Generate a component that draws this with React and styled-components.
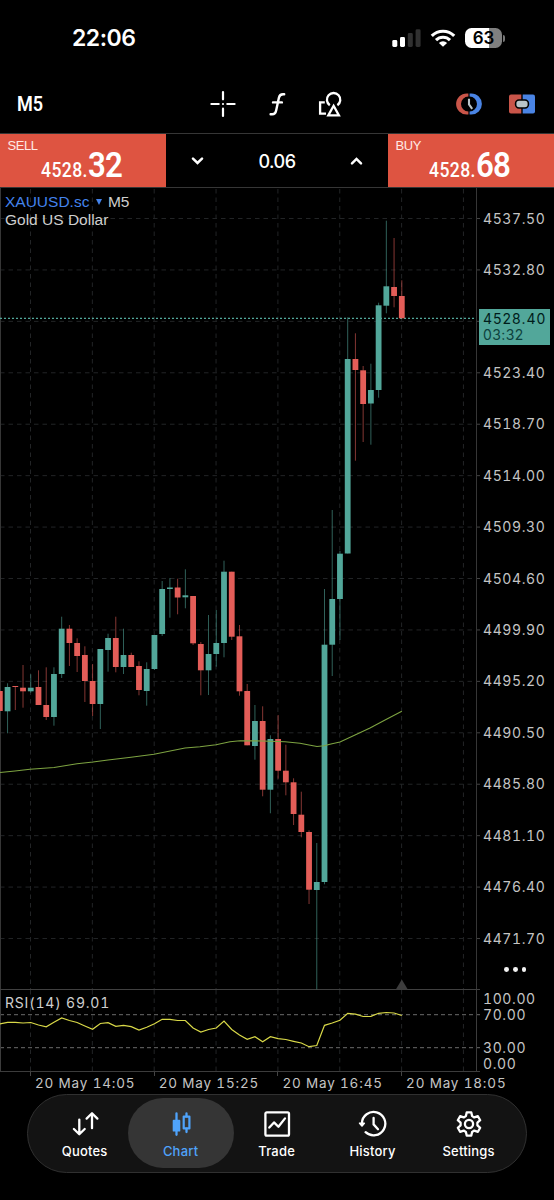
import React from 'react';
import styled, { createGlobalStyle } from 'styled-components';

const GlobalStyle = createGlobalStyle`
  * {
    box-sizing: border-box;
  }
  body {
    margin: 0;
    background: #000;
    font-family: Inter, 'Liberation Sans', sans-serif;
  }
`;

const UP = '#52a79a';
const DOWN = '#e35d58';

const Screen = styled.div`
  width: 554px;
  height: 1200px;
  background: #000;
  color: #fff;
  display: flex;
  flex-direction: column;
  overflow: hidden;
  svg {
    display: block;
    flex: none;
  }
`;

const StatusBar = styled.header`
  height: 76px;
  display: flex;
  align-items: center;
  justify-content: space-between;
  padding: 0 49px 0 72px;
`;

const Clock = styled.span`
  font-size: 23px;
  font-weight: 600;
  letter-spacing: -0.5px;
`;

const StatusIcons = styled.div`
  display: flex;
  align-items: center;
  gap: 9px;
`;

// Battery pill, filled from the left by level
const Battery = styled.div`
  display: flex;
  align-items: center;
  gap: 1px;
`;

const BatteryBody = styled.div`
  width: 37px;
  height: 20px;
  border-radius: 6.5px;
  background: linear-gradient(to right, #fff 0 64%, #808080 64%);
  color: #000;
  font-size: 17px;
  font-weight: 600;
  line-height: 20px;
  text-align: center;
`;

const BatteryTip = styled.div`
  width: 2px;
  height: 7px;
  border-radius: 0 2px 2px 0;
  background: #777;
`;

const Toolbar = styled.nav`
  height: 57px;
  display: grid;
  grid-template-columns: 1fr auto 1fr;
  align-items: center;
  padding: 0 18px 1px 17px;
`;

const Timeframe = styled.span`
  font-family: Roboto, sans-serif;
  font-size: 21px;
  font-weight: 600;
  transform: scaleX(0.86);
  transform-origin: left;
`;

const Tools = styled.div`
  display: flex;
  align-items: center;
  justify-content: ${(props) => props.$align || 'center'};
  gap: ${(props) => props.$gap}px;
`;

const TradePanel = styled.section`
  height: 55px;
  display: flex;
  border-top: 1px solid #363636;
  border-bottom: 1px solid #363636;
`;

const QuoteButton = styled.div`
  width: 166px;
  background: #de5441;
  padding-top: 3px;
  padding-left: 7.5px;
`;

const QuoteLabel = styled.div`
  font-family: 'Liberation Sans', sans-serif;
  font-size: 13px;
  line-height: 18px;
  color: #ffe9e4;
  letter-spacing: -0.4px;
`;

const QuotePrice = styled.div`
  display: flex;
  align-items: baseline;
  margin-left: 33.5px;
  margin-top: -9px;
  font-family: Roboto, sans-serif;
  font-size: 20px;
  font-weight: 500;
  line-height: 38px;
  letter-spacing: 0.45px;
  transform: scaleX(0.88);
  transform-origin: left;
  b {
    font-size: 35.5px;
    font-weight: 600;
    letter-spacing: -0.7px;
  }
`;

const Volume = styled.div`
  flex: 1;
  display: flex;
  align-items: center;
  justify-content: space-between;
  padding: 1px 25px 0 25px;
  font-size: 18px;
  font-weight: 500;
  letter-spacing: -0.5px;
`;

const ChartRow = styled.section`
  display: flex;
  height: ${(props) => props.$height}px;
  position: relative;
`;

// Text drawn over the top left corner of a pane
const PaneTitle = styled.div`
  position: absolute;
  top: ${(props) => props.$top}px;
  left: 5px;
  font-family: 'Liberation Sans', sans-serif;
  font-size: 15.5px;
  line-height: 18px;
  color: #cfcfcf;
`;

const SymbolLine = styled.div`
  display: flex;
  align-items: center;
`;

const SymbolName = styled.span`
  color: #4383ec;
`;

const Arrow = styled.i`
  border: 3px solid transparent;
  border-top: 6px solid #4383ec;
  border-bottom: 0;
  margin: 1px 6px 0 6.5px;
`;

const RsiTitle = styled(PaneTitle)`
  font-family: Inter, sans-serif;
  font-size: 14px;
  letter-spacing: 0.8px;
  font-variant-numeric: tabular-nums;
`;

const Axis = styled.div`
  flex: 1;
  display: flex;
  flex-direction: column;
  padding: ${(props) => props.$top}px 0 0 3px;
  font-size: 14px;
  letter-spacing: 0.6px;
  font-variant-numeric: tabular-nums;
  color: #c4c4c4;
`;

const Tick = styled.div`
  height: ${(props) => props.$height}px;
  line-height: ${(props) => props.$height}px;
  margin-bottom: ${(props) => props.$after || 0}px;
  flex: none;
`;

const LastPrice = styled.div`
  position: absolute;
  left: 479px;
  top: 121px;
  width: 71px;
  height: 36px;
  padding: 1px 0 0 4px;
  background: #52a79a;
  color: #001d1b;
  font-size: 14px;
  line-height: 17px;
  letter-spacing: 1px;
  div + div {
    color: #0d423d;
    letter-spacing: 0.4px;
    line-height: 16px;
  }
`;

const More = styled.div`
  display: flex;
  gap: 4px;
  margin: 3px 0 0 21px;
  i {
    width: 4.8px;
    height: 4.8px;
    border-radius: 50%;
    background: #f2f2f2;
  }
`;

const TimeAxis = styled.div`
  height: 22px;
  display: grid;
  grid-template-columns: repeat(4, 123.7px);
  padding-left: 30px;
  font-size: 13.5px;
  line-height: 23px;
  letter-spacing: 0.82px;
  font-variant-numeric: tabular-nums;
  color: #c4c4c4;
`;

const TimeLabel = styled.span`
  padding-left: 5px;
  white-space: nowrap;
  background: linear-gradient(#444, #444) no-repeat 0 0 / 1px 4px;
`;

const TabBar = styled.nav`
  width: 500px;
  height: 79px;
  margin: 0 0 0 27px;
  padding: 3px 0 0 8.6px;
  display: flex;
  align-items: flex-start;
  border: 1px solid #303030;
  border-radius: 40px;
  background: #131313;
`;

const Tab = styled.div`
  width: ${(props) => (props.$active ? 106 : 96)}px;
  margin: 0 ${(props) => (props.$active ? -5 : 0)}px;
  height: 70px;
  flex: none;
  border-radius: 35px;
  background: ${(props) => (props.$active ? '#353535' : 'transparent')};
  color: ${(props) => (props.$active ? '#4fa3fb' : '#fff')};
  display: flex;
  flex-direction: column;
  align-items: center;
  padding-top: 12px;
  font-size: 13px;
  font-weight: 500;
  line-height: 18px;
  letter-spacing: 0.2px;
  gap: 4px;
`;

// x centre of a bar, counted back from the newest one
const barX = (k) => 401.8 - k * 7.73;

// [top of body, bottom of body, high, low, direction], oldest first
const candles = [
  [691, 711, 691, 711, 0], [687, 711.3, 683.3, 733.3, 1], [686, 687, 686, 710, 0],
  [687.7, 691.3, 665, 707.7, 0], [687.7, 691.3, 674.3, 692.7, 1], [687, 705, 670.3, 705, 0],
  [705, 717, 667.3, 720, 0], [674, 717, 667.3, 725.7, 1], [628.7, 674, 616.7, 678, 1],
  [628.7, 643, 625, 666, 0], [643, 656, 638.3, 672, 0], [655, 681, 646.3, 702, 0],
  [681, 704, 664, 716, 0], [649, 704, 649, 729, 1], [638, 650, 633.7, 671.7, 1],
  [638, 667, 616.7, 672.3, 0], [655, 667, 628.7, 674, 1], [655, 667, 652.7, 667, 0],
  [666, 690, 661.3, 695.3, 0], [669, 691, 662.3, 705.7, 1], [635, 669, 635, 670, 1],
  [589, 634, 581, 636, 1], [587.5, 589, 578, 617.7, 1], [587.5, 597.5, 578.7, 614.3, 0],
  [595.3, 597.3, 569.3, 608.3, 1], [596, 643.3, 596, 645, 0], [644, 670.3, 642, 695.3, 0],
  [654, 670.3, 615, 695, 1], [643, 654, 610, 666.7, 1], [571.7, 643, 560.7, 657.3, 1],
  [571.7, 636.7, 571.7, 640, 0], [636.3, 691.3, 625, 695.7, 0], [691, 745.3, 684, 745.3, 0],
  [721, 746, 705, 759.7, 1], [721, 789.7, 706.3, 796.3, 0], [739, 789.7, 735.3, 813.3, 1],
  [739, 770.7, 715, 778.7, 0], [770.7, 782.3, 744.7, 795.3, 0], [782.3, 814, 778.3, 825, 0],
  [814.7, 832, 791.7, 837.3, 0], [832, 889.7, 830.3, 904, 0], [882, 890, 843, 989.3, 1],
  [644.7, 882, 589, 884.3, 1], [599, 644.7, 510, 676, 1], [553.7, 599, 551, 640, 1],
  [359, 553.5, 317.3, 553.5, 1], [359, 370, 333.3, 460.7, 0], [370.3, 404, 366, 442, 0],
  [390, 403.5, 363.7, 444.7, 1], [305.3, 390, 302.7, 397.7, 1], [286.3, 305.7, 220.7, 313.3, 1],
  [287, 296, 238, 307.3, 0], [296, 318.3, 280.3, 318.3, 0],
];

const average =
  '0,772.5 15,771 30,769.3 54,767.5 77,763.7 93,762 108,760 131,757.3 154,754.3 185,748 200,746.7 216,744.7 230,741.8 240,740.7 262,741 285,741.8 300,743.3 309,745 317,746.5 324,745.7 332,743.7 340,742 355,735 370,728 386,719.5 401.8,711.3';

const rsi = [
  1024, 1022.3, 1022.3, 1023, 1022.5, 1025, 1026.8, 1022.3, 1018, 1020.5, 1022.5, 1026, 1029.3,
  1023.5, 1022.7, 1026.3, 1025.3, 1026.7, 1030, 1027.3, 1023.7, 1019.3, 1019.3, 1020.5, 1020.5,
  1028, 1032, 1029.5, 1028, 1021, 1029.5, 1035, 1039.3, 1036.7, 1041.7, 1036.7, 1038.7, 1039.5,
  1041.3, 1043, 1046.7, 1045.5, 1025.3, 1023, 1020.3, 1013.3, 1014.2, 1016.5, 1016.3, 1013.3,
  1012.5, 1013, 1015.5,
];

const columns = [0, 1, 2, 3, 4, 5, 6, 7].map((i) => 30.5 + i * 61.85);
const rows = Array.from({ length: 15 }, (_, i) => 218.5 + i * 51.43);
const prices = rows.map((_, i) => (4537.5 - i * 4.7).toFixed(2));

const GridColumns = ({ from, to }) =>
  columns.map((x) => (
    <line key={x} x1={x} x2={x} y1={from} y2={to} stroke="#222426" strokeDasharray="4.5 4" />
  ));

const PriceChart = () => (
  <svg width="480" height="802" viewBox="0 188 480 802">
    <GridColumns from={189} to={990} />
    {rows.map((y) => (
      <g key={y}>
        <line x1="0" x2="476" y1={y} y2={y} stroke="#222426" strokeDasharray="4.5 4" />
        <line x1="476" x2="480" y1={y} y2={y} stroke="#444" />
      </g>
    ))}
    <path d="M0.5 188V990M476.5 188V990" stroke="#363636" />
    <path d="M0 989.5H480" stroke="#404040" />
    <path d="M395.8 989.5L401.8 979.5L407.8 989.5Z" fill="#3d3d3d" />
    <path d="M0 318.3H476" stroke={UP} strokeWidth="1.2" strokeDasharray="2 2" />
    {candles.map(([top, bottom, high, low, up], i) => {
      const x = barX(candles.length - 1 - i);
      const color = up ? UP : DOWN;
      return (
        <g key={i}>
          <line x1={x} x2={x} y1={high} y2={low} stroke={color} strokeWidth="0.9" opacity="0.65" />
          <rect x={x - 2.9} y={top} width="5.8" height={bottom - top} fill={color} />
        </g>
      );
    })}
    <polyline points={average} fill="none" stroke="#7da341" strokeWidth="1.1" />
  </svg>
);

const RsiChart = () => (
  <svg width="480" height="82" viewBox="0 990 480 82">
    <GridColumns from={990} to={1072} />
    <path d="M0 1014.7H480M0 1047.7H480" stroke="#6a6a6a" strokeDasharray="4 3" />
    <path d="M0.5 990V1072M476.5 990V1072M0 1071.5H480" stroke="#3c3c3c" fill="none" />
    <polyline
      points={rsi.map((y, i) => `${barX(rsi.length - 1 - i)},${y}`).join(' ')}
      fill="none"
      stroke="#d9d948"
      strokeWidth="1.2"
    />
  </svg>
);

const SignalIcon = () => (
  <svg width="29" height="18" viewBox="0 0 29 18" fill="#fff">
    <rect x="0.3" y="11" width="5" height="7" rx="1.4" />
    <rect x="8" y="8" width="5" height="10" rx="1.4" />
    <rect x="15.8" y="4" width="5" height="14" rx="1.4" fill="#303030" />
    <rect x="23.6" y="0.3" width="5" height="17.7" rx="1.4" fill="#303030" />
  </svg>
);

const WifiIcon = () => (
  <svg width="26" height="18" viewBox="0 0 26 18" fill="none" stroke="#fff" strokeWidth="3.1">
    <path d="M1.8 6.9A15.8 15.8 0 0 1 24.2 6.9" />
    <path d="M6 11.2A9.9 9.9 0 0 1 20 11.2" />
    <path d="M13 17.8L8.9 13.9A5.8 5.8 0 0 1 17.1 13.9Z" fill="#fff" stroke="none" />
  </svg>
);

const CrosshairIcon = () => (
  <svg width="28" height="28" viewBox="0 0 28 28" stroke="#fff" strokeWidth="2.2" strokeLinecap="round">
    <path d="M13 2V9.3M13 18.7V26M1.4 14H8.7M17.3 14H24.6M13 14V14.01" />
  </svg>
);

const FunctionIcon = () => (
  <svg width="18" height="26" viewBox="0 0 18 26" fill="none" stroke="#fff" strokeWidth="2.4" strokeLinecap="round">
    <path d="M15.2 3.3H14C11.6 3.3 10.4 4.4 9.9 6.8L7.2 19.2C6.7 21.9 5.5 23.2 3.2 23.2H1.6M4 11.4H12.9" />
  </svg>
);

const ObjectsIcon = () => (
  <svg width="26" height="27" viewBox="0 0 26 27" fill="none" stroke="#fff" strokeWidth="2.3">
    <path d="M11.8 14.2A6.7 6.7 0 1 1 19.4 14.2" />
    <path d="M15.6 14.8L20.9 24.4H10.3Z" />
    <path d="M6.8 11.4H2.1V22.6H8" />
  </svg>
);

const TradeClockIcon = () => (
  <svg width="28" height="24" viewBox="0 0 28 24">
    <path d="M13.4 1.4H11.7A10.6 10.6 0 0 0 11.7 22.6H13.4V19.4A7.4 7.4 0 0 1 13.4 4.6Z" fill="#c95549" />
    <path d="M14.6 1.4H16.3A10.6 10.6 0 0 1 16.3 22.6H14.6V19.4A7.4 7.4 0 0 0 14.6 4.6Z" fill="#4a84e4" />
    <path d="M14 6.8V12.4L17.2 16.8" fill="none" stroke="#b9c4c8" strokeWidth="2.1" />
  </svg>
);

const OneClickIcon = () => (
  <svg width="28" height="22" viewBox="0 0 28 22">
    <path d="M13.3 1.5H3A2 2 0 0 0 1 3.5V18.5A2 2 0 0 0 3 20.5H13.3Z" fill="#c95549" />
    <path d="M14.7 1.5H25A2 2 0 0 1 27 3.5V18.5A2 2 0 0 1 25 20.5H14.7Z" fill="#4a84e4" />
    <rect x="7.6" y="7" width="12.8" height="8" rx="3.4" fill="#b9c4c8" stroke="#000" strokeWidth="1.6" />
  </svg>
);

const Chevron = ({ up }) => (
  <svg width="13" height="9" viewBox="0 0 13 9" fill="none" stroke="#fff" strokeWidth="2.5" strokeLinecap="round">
    <path d={up ? 'M2 6.3L6.5 1.9L11 6.3' : 'M2 1.6L6.5 6L11 1.6'} />
  </svg>
);

const TabIcon = ({ children }) => (
  <svg
    width="30"
    height="28"
    viewBox="0 0 30 28"
    fill="none"
    stroke="currentColor"
    strokeWidth="2.3"
    strokeLinecap="round"
    strokeLinejoin="round"
  >
    {children}
  </svg>
);

const tabs = [
  {
    label: 'Quotes',
    icon: <path d="M9.3 9.6V24M3.9 19L9.3 24.3L14.7 19M22 18.2V3.6M16.6 8.6L22 3.3L27.4 8.6" />,
  },
  {
    label: 'Chart',
    icon: (
      <>
        <path d="M10.5 3.4V24.8M20.5 3.4V6.4M20.5 18.7V22" />
        <rect x="7.6" y="10.7" width="5.8" height="10" fill="currentColor" strokeWidth="1.8" />
        <rect x="17.7" y="6.6" width="5.7" height="11.8" strokeWidth="2.2" />
      </>
    ),
  },
  {
    label: 'Trade',
    icon: (
      <>
        <rect x="3.4" y="2.4" width="23.6" height="23.2" rx="1.4" />
        <path d="M7.3 17.6L12 12.4L16.4 16.8L23 8.4" />
      </>
    ),
  },
  {
    label: 'History',
    icon: (
      <>
        <path d="M3.9 13.4A11.7 11.7 0 1 1 7.6 22.2" />
        <path d="M1.6 13.2H6.3L4 15.9Z" fill="currentColor" strokeWidth="1.6" />
        <path d="M15.6 8V14.4L20 19.2" />
      </>
    ),
  },
  {
    label: 'Settings',
    icon: (
      <>
        <circle cx="15" cy="14" r="4.1" />
        <path d="M12.7 2.4H17.3L18.1 6.1L20.3 7.4L23.9 6.2L26.2 10.2L23.4 12.7V15.3L26.2 17.8L23.9 21.8L20.3 20.6L18.1 21.9L17.3 25.6H12.7L11.9 21.9L9.7 20.6L6.1 21.8L3.8 17.8L6.6 15.3V12.7L3.8 10.2L6.1 6.2L9.7 7.4L11.9 6.1Z" />
      </>
    ),
  },
];

const Quote = ({ label, whole, pips }) => (
  <QuoteButton>
    <QuoteLabel>{label}</QuoteLabel>
    <QuotePrice>
      {whole}
      <b>{pips}</b>
    </QuotePrice>
  </QuoteButton>
);

const App = () => {
  return (
    <Screen>
      <GlobalStyle />
      <StatusBar>
        <Clock>22:06</Clock>
        <StatusIcons>
          <SignalIcon />
          <WifiIcon />
          <Battery>
            <BatteryBody>63</BatteryBody>
            <BatteryTip />
          </Battery>
        </StatusIcons>
      </StatusBar>

      <Toolbar>
        <Timeframe>M5</Timeframe>
        <Tools $gap={31}>
          <CrosshairIcon />
          <FunctionIcon />
          <ObjectsIcon />
        </Tools>
        <Tools $gap={25} $align="flex-end">
          <TradeClockIcon />
          <OneClickIcon />
        </Tools>
      </Toolbar>

      <TradePanel>
        <Quote label="SELL" whole="4528." pips="32" />
        <Volume>
          <Chevron />
          <span>0.06</span>
          <Chevron up />
        </Volume>
        <Quote label="BUY" whole="4528." pips="68" />
      </TradePanel>

      <ChartRow $height={802}>
        <PriceChart />
        <PaneTitle $top={4.5}>
          <SymbolLine>
            <SymbolName>XAUUSD.sc</SymbolName>
            <Arrow />
            M5
          </SymbolLine>
          Gold US Dollar
        </PaneTitle>
        <Axis $top={4.6}>
          {prices.map((price, i) => (
            <Tick key={price} $height={51.43}>
              {i === 2 ? '' : price}
            </Tick>
          ))}
          <More>
            <i />
            <i />
            <i />
          </More>
        </Axis>
        <LastPrice>
          <div>4528.40</div>
          <div>03:32</div>
        </LastPrice>
      </ChartRow>

      <ChartRow $height={82}>
        <RsiChart />
        <RsiTitle $top={4}>RSI(14) 69.01</RsiTitle>
        <Axis $top={1}>
          <Tick $height={16}>100.00</Tick>
          <Tick $height={16} $after={17}>70.00</Tick>
          <Tick $height={16}>30.00</Tick>
          <Tick $height={16}>0.00</Tick>
        </Axis>
      </ChartRow>

      <TimeAxis>
        <TimeLabel>20 May 14:05</TimeLabel>
        <TimeLabel>20 May 15:25</TimeLabel>
        <TimeLabel>20 May 16:45</TimeLabel>
        <TimeLabel>20 May 18:05</TimeLabel>
      </TimeAxis>

      <TabBar>
        {tabs.map((tab) => (
          <Tab key={tab.label} $active={tab.label === 'Chart'}>
            <TabIcon>{tab.icon}</TabIcon>
            {tab.label}
          </Tab>
        ))}
      </TabBar>
    </Screen>
  );
};

export default App;
